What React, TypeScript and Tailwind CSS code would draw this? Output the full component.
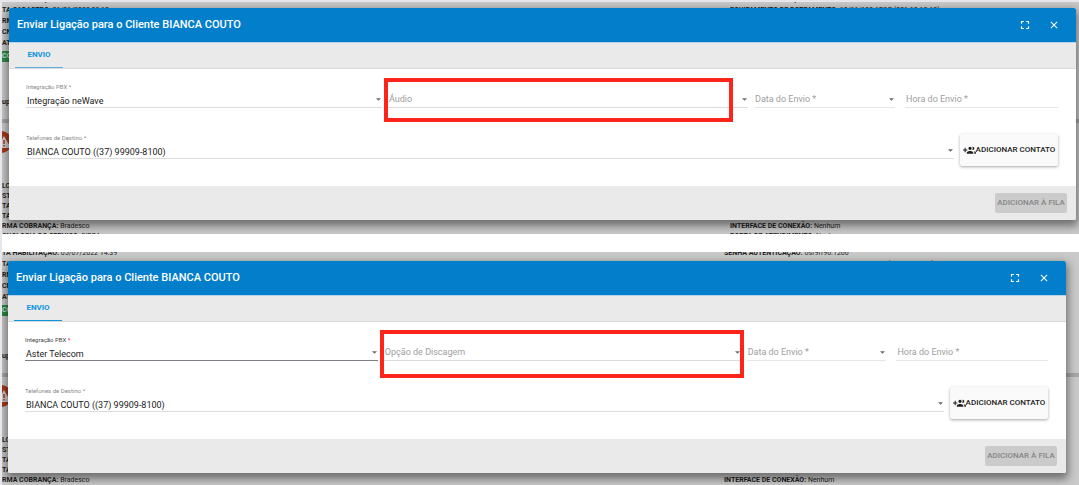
import { useId } from "react";
import { MdClose, MdFullscreen } from "react-icons/md";

const FIELD =
  "block h-[17px] w-full appearance-none rounded-none border-b bg-transparent pl-px text-[9px] leading-[15px] outline-none";

function Arrow() {
  return (
    <svg
      viewBox="0 0 6 3"
      className="pointer-events-none absolute right-px bottom-[7px] h-[3px] w-[5px] fill-[#6b6b6b]"
      aria-hidden="true"
    >
      <path d="M0 0h6L3 3z" />
    </svg>
  );
}

function GroupAddIcon() {
  return (
    <svg viewBox="0 0 24 24" className="size-[13px] shrink-0 fill-current" aria-hidden="true">
      <path d="M8 10H5V7H3v3H0v2h3v3h2v-3h3v-2zm10 1c1.66 0 2.99-1.34 2.99-3S19.66 5 18 5c-.32 0-.63.05-.91.14.57.81.9 1.79.9 2.86s-.34 2.04-.9 2.86c.28.09.59.14.91.14zm-5 0c1.66 0 2.99-1.34 2.99-3S14.66 5 13 5c-1.66 0-3 1.34-3 3s1.34 3 3 3zm6.62 2.16c.83.73 1.38 1.66 1.38 2.84v2h3v-2c0-1.54-2.37-2.49-4.38-2.84zM13 13c-2 0-6 1-6 3v2h12v-2c0-2-4-3-6-3z" />
    </svg>
  );
}

function Highlight({ className }: { className: string }) {
  return (
    <div
      className={`pointer-events-none absolute z-10 border-4 border-[#ff2419] ${className}`}
    />
  );
}

function FilledSelect({
  label,
  value,
  focused,
}: {
  label: string;
  value: string;
  focused?: boolean;
}) {
  const id = useId();
  return (
    <div className="relative flex flex-col">
      <label
        htmlFor={id}
        className={`text-[6px] leading-2 ${focused ? "text-[#444]" : "text-[#8a8a8a]"}`}
      >
        {label} <span className={focused ? "text-red-600" : ""}>*</span>
      </label>
      <select
        id={id}
        className={`${FIELD} pt-[3px] text-[#212121] ${focused ? "border-[#7d7d86]" : "border-[#dcdcdc]"}`}
      >
        <option>{value}</option>
      </select>
      <Arrow />
    </div>
  );
}

function Modal({
  pbx,
  option,
  focused,
  highlight,
}: {
  pbx: string;
  option: string;
  focused?: boolean;
  highlight: string;
}) {
  return (
    <section
      role="dialog"
      aria-label="Enviar Ligação para o Cliente BIANCA COUTO"
      className="overflow-hidden rounded-[2px] bg-white shadow-[0_4px_9px_2px_rgba(0,0,0,0.45)]"
    >
      <header className="flex h-[34px] items-center bg-[#037ecb] pr-4 pl-2 text-white">
        <h2 className="grow text-[11px] font-medium">
          Enviar Ligação para o Cliente BIANCA COUTO
        </h2>
        <div className="flex gap-4">
          <button type="button" aria-label="Tela cheia">
            <MdFullscreen className="size-[14px]" />
          </button>
          <button type="button" aria-label="Fechar">
            <MdClose className="size-3" />
          </button>
        </div>
      </header>

      <nav className="flex h-[27px] border-y border-t-[#b4d3e8] border-b-[#dadada] bg-[#eaeaea] pl-1.5">
        <button
          type="button"
          className={`w-12 border-b text-[8px] font-bold text-[#0d94e0] ${
            focused ? "border-[#0d94e0]" : "border-[#5fb0e3]"
          }`}
        >
          ENVIO
        </button>
      </nav>

      <form className="flex h-[117px] flex-col gap-[26px] pt-3.5 pr-[18px] pl-[17px]">
        <div className="grid grid-cols-[356fr_360fr_141fr_157fr] items-end gap-x-1.5">
          <FilledSelect label="Integração PBX" value={pbx} focused={focused} />
          <div className="relative">
            <select
              aria-label={option}
              className={`${FIELD} border-[#dcdcdc] pt-px text-[#9e9e9e]`}
            >
              <option>{option}</option>
            </select>
            <Arrow />
            <Highlight className={highlight} />
          </div>
          <div className="relative">
            <input
              aria-label="Data do Envio"
              placeholder="Data do Envio *"
              className={`${FIELD} border-[#e6e6e6] placeholder:text-[#9e9e9e]`}
            />
            <Arrow />
          </div>
          <div className="pl-1">
            <input
              aria-label="Hora do Envio"
              placeholder="Hora do Envio *"
              className={`${FIELD} border-[#e6e6e6] placeholder:text-[#9e9e9e]`}
            />
          </div>
        </div>
        <div className="flex gap-1.5">
          <div className="grow">
            <FilledSelect label="Telefones de Destino" value="BIANCA COUTO ((37) 99909-8100)" />
          </div>
          <button
            type="button"
            className="flex h-8 w-[98px] items-center justify-center rounded-[2px] bg-[#fafafa] text-[8px] font-medium whitespace-nowrap text-[#212121] shadow-[0_1px_3px_rgba(0,0,0,0.35)]"
          >
            <GroupAddIcon />
            ADICIONAR CONTATO
          </button>
        </div>
      </form>

      <footer className="flex h-[34px] items-center justify-end bg-[#eaeaea] pr-[9px]">
        <button
          type="button"
          disabled
          className="h-5 w-[72px] rounded-[2px] bg-[#cbcbcb] text-[8px] font-medium whitespace-nowrap text-[#858585]"
        >
          ADICIONAR À FILA
        </button>
      </footer>
    </section>
  );
}

function Row({ name, value }: { name: string; value?: string }) {
  return (
    <p className="whitespace-nowrap">
      <b>{name}</b> {value}
    </p>
  );
}

// client record page dimmed behind the dialog
function ClientPage({ columns }: { columns: string }) {
  return (
    <div className="text-[7px] leading-[11px] text-[#1c1c1c]">
      <div className={`grid h-[53px] ${columns}`}>
        <div>
          <Row name="TA HABILITAÇÃO:" value="05/07/2022 14:39" />
          <Row name="TA CADASTRO:" value="01/01/2022 09:10" />
          <Row name="RM" />
          <Row name="CN" />
          <Row name="AT" />
        </div>
        <div>
          <Row name="SENHA AUTENTICAÇÃO:" value="osf9ff96.1266" />
          <Row name="EQUIPAMENTO DE ROTEAMENTO:" value="10/11/199 6TOP (001.10.10.60)" />
        </div>
      </div>
      <div className="mt-1 h-[11px] w-10 bg-[#2c8a41] font-bold text-[#cfe3d3]">CO</div>
      <div className="mt-[35px] h-[22px] font-bold">up</div>
      <div className="h-1 bg-[#a6a6a6]" />
      <svg viewBox="0 0 22 22" className="mt-2 -ml-3 size-[22px]" aria-hidden="true">
        <circle cx="11" cy="11" r="11" fill="#a8391c" />
        <path d="M14 5l7 12H7z" fill="#cfcfcf" />
        <path d="M14 9v4M14 14v1.500" stroke="#a8391c" strokeWidth="1.500" />
      </svg>
      <div className={`mt-7 grid leading-[10px] ${columns}`}>
        <div>
          <Row name="LO" />
          <Row name="ST" />
          <Row name="TA" />
          <Row name="TA" />
          <Row name="RMA COBRANÇA:" value="Bradesco" />
          <Row name="CNOLOGIA DO SERVIÇO:" value="FIBRA" />
        </div>
        <div className="self-end">
          <Row name="INTERFACE DE CONEXÃO:" value="Nenhum" />
          <Row name="PORTA DE ATENDIMENTO:" value="Nenhum" />
        </div>
      </div>
    </div>
  );
}

export default function App() {
  return (
    <main className="flex flex-col gap-[18px] border-t-2 border-l-2 border-[#e6e6ec] bg-white font-[Roboto,sans-serif]">
      <div className="relative overflow-hidden bg-[#c9c9c9] pt-1.5 pr-[3px] pb-3.5 pl-[7px]">
        <div className="absolute inset-x-0 -top-2">
          <ClientPage columns="grid-cols-[728fr_349fr]" />
        </div>
        <div className="relative">
          <Modal
            pbx="Integração neWave"
            option="Áudio"
            highlight="-top-[13px] right-[15px] -bottom-3.5 -left-1"
          />
        </div>
      </div>
      <div className="relative overflow-hidden bg-[#c9c9c9] pt-[9px] pr-[13px] pb-3 pl-1.5">
        <div className="absolute inset-x-0 -top-1">
          <ClientPage columns="grid-cols-[722fr_355fr]" />
        </div>
        <div className="relative">
          <Modal
            pbx="Aster Telecom"
            option="Opção de Discagem"
            focused
            highlight="-top-3.5 -right-[3px] -bottom-[17px] -left-1"
          />
        </div>
      </div>
    </main>
  );
}
